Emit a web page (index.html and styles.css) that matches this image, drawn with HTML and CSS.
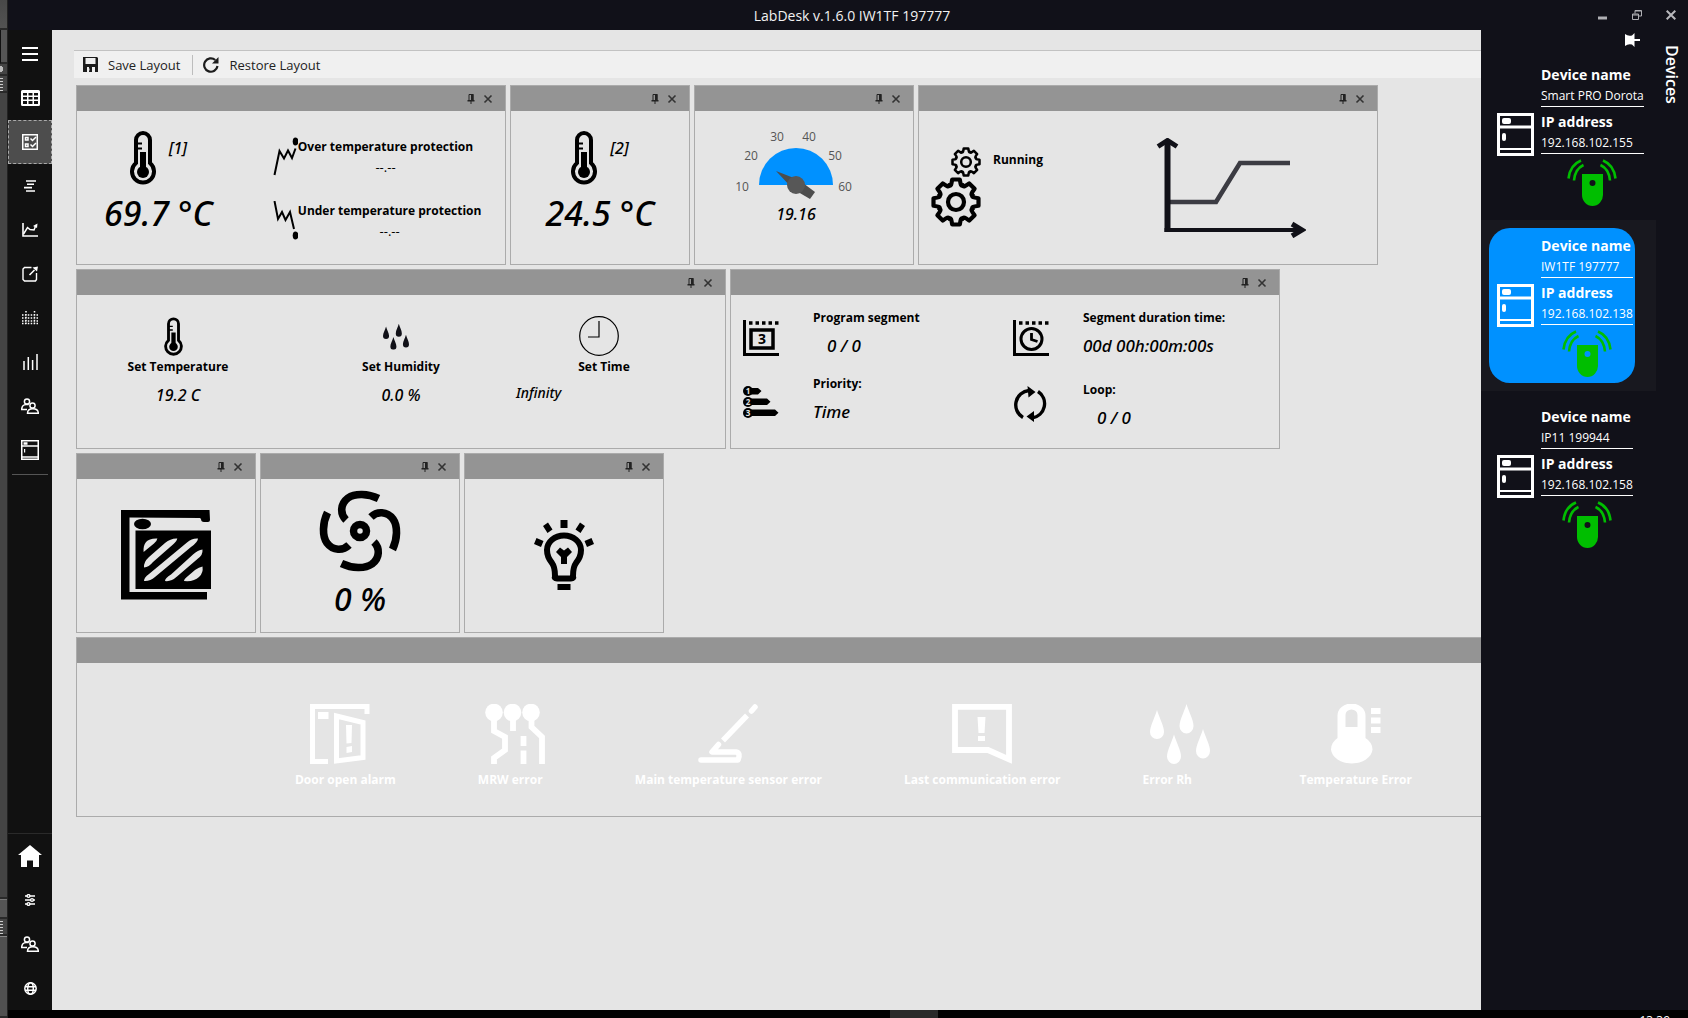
FILE: index.html
```
<!DOCTYPE html>
<html lang="en">
<head>
<meta charset="utf-8">
<title>LabDesk v.1.6.0</title>
<link rel="stylesheet" href="styles.css">
</head>
<body>
<svg class="defs" aria-hidden="true">
  <defs>
    <symbol id="thermo" viewBox="0 0 26 56">
      <path d="M6 34V11a7 7 0 0 1 14 0v23a11 11 0 1 1-14 0z" fill="none" stroke="#000" stroke-width="4"/>
      <circle cx="13" cy="43" r="6"/><path d="M10 23h6v20h-6zM6 13.500h6v2H6zM6 18.500h6v2H6z"/>
    </symbol>
    <symbol id="pin" viewBox="0 0 10 12">
      <path d="M3 1.500h4v6H3z" fill="none" stroke="#222"/><path d="M5 1h2.500v7H5zM1.500 7h7v1.500h-7zM4.500 8h1v3h-1z" fill="#222"/>
    </symbol>
    <symbol id="close" viewBox="0 0 10 10"><path d="M1.500 1.500l7 7M8.500 1.500l-7 7" stroke="#333" stroke-width="1.600"/></symbol>
    <symbol id="gear" viewBox="-25 -25 50 50">
      <g fill="none" stroke="#000" stroke-width="4.200" stroke-linejoin="round" stroke-linecap="round">
        <path id="t" d="M-6.800 -16.500C-5 -15.800 -4.700 -17 -3.800 -22.500H3.800C4.700 -17 5 -15.800 6.800 -16.500"/>
        <use href="#t" transform="rotate(45)"/><use href="#t" transform="rotate(90)"/><use href="#t" transform="rotate(135)"/><use href="#t" transform="rotate(180)"/><use href="#t" transform="rotate(225)"/><use href="#t" transform="rotate(270)"/><use href="#t" transform="rotate(315)"/>
        <circle r="8"/>
      </g>
    </symbol>
    <symbol id="drops" viewBox="0 0 60 60">
      <path d="M7 6C9 13 14 22 14 28a7 7 0 0 1-14 0C0 22 5 13 7 6zM36.500 0c2 7 7 16 7 22a7 7.500 0 0 1-14 0c0-6 5-15 7-22zM24 30.500c2 7 7 16 7 22a7 7.500 0 0 1-14 0c0-6 5-15 7-22zM53 25c2 7 7 16 7 22a7 7.500 0 0 1-14 0c0-6 5-15 7-22z"/>
    </symbol>
    <symbol id="chamber" viewBox="0 0 37 43">
      <g fill="none" stroke="#fff"><path d="M1.500 1.500h34v40h-34zM1.500 14h34" stroke-width="3"/><path d="M1.500 36h34" stroke-width="2"/></g>
      <rect x="5" y="5" width="9" height="6" rx="2" fill="#fff"/><rect x="5" y="20" width="4" height="8" rx="2" fill="#fff"/>
    </symbol>
    <symbol id="sensor" viewBox="0 0 50 48">
      <path fill="#00be00" fill-rule="evenodd" d="M15 15h21v21a10.500 11 0 0 1-21 0zM25.500 21a3 3 0 1 0 0 6 3 3 0 0 0 0-6z"/>
      <path d="M7 21.500Q8 10 16.500 6M1.500 19.500Q3 6 14 1.500M43 21.500Q42 10 33.500 6M48.500 19.500Q47 6 36 1.500" fill="none" stroke="#00be00" stroke-width="2.600"/>
    </symbol>
    <symbol id="users" viewBox="0 0 18 16">
      <g fill="none" stroke="#fff" stroke-width="1.500"><circle cx="6" cy="3.500" r="2.600"/><circle cx="11.500" cy="7.500" r="2.600"/><path d="M6.500 15.300h10.800c0-3-2-4.500-5.500-4.500s-5.300 1.500-5.300 4.500zM6 11.500H.7c0-3 2-5 4.500-5h2.500"/></g>
    </symbol>
  </defs>
</svg>

<div class="desktop">
  <div class="backdrop" aria-hidden="true">
    <i class="b-top"></i><i class="b-bar"></i><i class="b-row"></i><i class="b-grip"></i><i class="b-fill"></i><i class="b-bar2"></i><i class="b-grip"></i><i class="b-end"></i>
  </div>

  <div class="app">
    <header class="titlebar">
      <h1>LabDesk v.1.6.0 IW1TF 197777</h1>
      <div class="win">
        <button aria-label="Minimise"><svg width="10" height="10" viewBox="0 0 10 10"><path d="M0 8h9" stroke="#b0b0b4" stroke-width="3"/></svg></button>
        <button aria-label="Restore"><svg width="10" height="10" viewBox="0 0 10 10"><path d="M.5 4h6v5.500h-6zM.5 5h6M3 3.500v-3h6.500V6H7M3 1h6.500" fill="none" stroke="#b0b0b4"/></svg></button>
        <button aria-label="Close"><svg width="10" height="10" viewBox="0 0 10 10"><path d="M.7.7l8.600 8.600M9.300.7L.7 9.300" stroke="#b8b8bc" stroke-width="2"/></svg></button>
      </div>
    </header>

    <div class="main">
      <nav class="rail">
        <button aria-label="Menu"><svg width="16" height="14" viewBox="0 0 16 14"><path d="M0 1h16M0 7h16M0 13h16" stroke="#fff" stroke-width="2"/></svg></button>
        <button aria-label="Table"><svg width="19" height="16" viewBox="0 0 19 16"><path fill="#fff" fill-rule="evenodd" d="M1.500 0h16A1.500 1.500 0 0 1 19 1.500v13a1.500 1.500 0 0 1-1.500 1.500h-16A1.500 1.500 0 0 1 0 14.500v-13A1.500 1.500 0 0 1 1.500 0zM2 3v2.500h4V3zm5.500 0v2.500h4V3zM13 3v2.500h4V3zM2 7v2.500h4V7zm5.500 0v2.500h4V7zM13 7v2.500h4V7zM2 11v3h4v-3zm5.500 0v3h4v-3zm5.500 0v3h4v-3z"/></svg></button>
        <button class="on" aria-label="Dashboard"><svg width="16" height="16" viewBox="0 0 16 16"><rect x=".75" y=".75" width="14.500" height="14.500" fill="none" stroke="#fff" stroke-width="1.500"/><path d="M3.500 3.500h2.500v2.500H3.500zM3.500 10h2.500v2.500H3.500z" fill="none" stroke="#fff" stroke-width="1.500"/><path d="M8.500 4.500l2 2L14 3M8.500 10.500l2 2L14 9" fill="none" stroke="#fff" stroke-width="1.500"/></svg></button>
        <button aria-label="Programs"><svg width="12" height="12" viewBox="0 0 12 12"><path d="M2 1h10M3 4.300h7M0 7.600h8M2 11h9" stroke="#fff" stroke-width="1.600"/></svg></button>
        <button aria-label="Chart"><svg width="16" height="14" viewBox="0 0 16 14"><path d="M1 0v13h15" fill="none" stroke="#fff" stroke-width="1.600"/><path d="M1.500 11l4-6.500 2.500 2 4 .5L14 2" fill="none" stroke="#fff" stroke-width="1.500"/><path d="M11 3L15.500.500 15 5z" fill="#fff"/></svg></button>
        <button aria-label="Export"><svg width="16" height="16" viewBox="0 0 16 16"><path d="M9.500 1.500H2.500L1 3v10.500L2.500 15h11l1-1.500V7" fill="none" stroke="#fff" stroke-width="1.400"/><path d="M7.500 9l5-5" stroke="#fff" stroke-width="1.600"/><path d="M10.500 1.500L16 .500 15 5.500z" fill="#fff"/></svg></button>
        <button aria-label="Matrix"><svg width="16" height="14" viewBox="0 0 16 14"><path d="M0 4h16M0 7h16M0 10h16M0 12.500h16M4 0v14M12.500 0v14" stroke="#fff" stroke-width="1.500" stroke-dasharray="1.500 1.400"/></svg></button>
        <button aria-label="Statistics"><svg width="15" height="16" viewBox="0 0 15 16"><path d="M1 7v9M5.300 3v13M9.600 6v10M14 0v16" stroke="#fff" stroke-width="1.500"/></svg></button>
        <button aria-label="Users"><svg width="18" height="16"><use href="#users"/></svg></button>
        <button aria-label="Chamber"><svg width="18" height="20" viewBox="0 0 18 20"><path d="M.75.75h16.500v18.500H.75zM.75 6h16.500M.75 17h16.500" fill="none" stroke="#fff" stroke-width="1.500"/><path d="M2.500 2.300h4v2.400h-4zM3 9h1.200v3.500H3z" fill="#fff"/></svg></button>
        <hr>
        <div class="rail-foot">
          <button aria-label="Home"><svg width="24" height="22" viewBox="0 0 24 22"><path d="M12 0L0 10h3v12h6v-6.500h6V22h6V10h3z" fill="#fff"/></svg></button>
          <button aria-label="Settings"><svg width="10" height="12" viewBox="0 0 10 12"><path d="M0 2h10M0 6h10M0 10h10" stroke="#fff" stroke-width="1.400"/><g fill="#111" stroke="#fff" stroke-width="1.400"><circle cx="3.500" cy="2" r="1.400"/><circle cx="7" cy="6" r="1.400"/><circle cx="3.500" cy="10" r="1.400"/></g></svg></button>
          <button aria-label="Accounts"><svg width="18" height="16"><use href="#users"/></svg></button>
          <button aria-label="Language"><svg width="13" height="13" viewBox="0 0 13 13"><g fill="none" stroke="#fff" stroke-width="1.500"><circle cx="6.500" cy="6.500" r="5.700"/><ellipse cx="6.500" cy="6.500" rx="2.800" ry="5.700"/><path d="M1 4.700h11M1 8.300h11"/></g></svg></button>
        </div>
      </nav>

      <main class="work">
        <div class="toolbar">
          <button><svg width="15" height="15" viewBox="0 0 15 15"><path fill="#1c1c1c" fill-rule="evenodd" d="M0 0h14l1 1v14H0zM2.500 1v6h10V1zM3 10v5h9v-5z"/><path d="M6 10h3v5H6zM3 10h1v5H3z" fill="#1c1c1c"/><path d="M5 11.500h1.500v2H5z" fill="#f0f0f0"/></svg>Save Layout</button>
          <span class="sep"></span>
          <button><svg width="16" height="16" viewBox="0 0 16 16"><path d="M14.500 9A6.700 6.700 0 1 1 12.300 3" fill="none" stroke="#1c1c1c" stroke-width="2.200"/><path d="M15.500 0v6.500H9z" fill="#1c1c1c"/></svg>Restore Layout</button>
        </div>

        <div class="dock">
          <div class="row">
            <section class="panel w430">
              <div class="bar"><button aria-label="Pin"><svg width="10" height="12"><use href="#pin"/></svg></button><button aria-label="Close"><svg width="10" height="10"><use href="#close"/></svg></button></div>
              <div class="body first">
                <div class="reading"><div class="probe"><svg width="26" height="56"><use href="#thermo"/></svg><span>[1]</span></div><p class="big">69.7 °C</p></div>
                <div class="limits">
                  <div class="limit"><svg width="25" height="39" viewBox="0 0 25 39"><path d="M1.500 38L6.500 14l4.500 7.500 4-8L19 21l3.500-9.500" fill="none" stroke="#000" stroke-width="2"/><ellipse cx="22.500" cy="4.500" rx="2.800" ry="4"/></svg><div><b>Over temperature protection</b><span>--.--</span></div></div>
                  <div class="limit"><svg width="25" height="39" viewBox="0 0 25 39"><path d="M1.500 0L5 18l4-7 3.500 8L17 11l4 17" fill="none" stroke="#000" stroke-width="2"/><ellipse cx="22.500" cy="34.500" rx="2.800" ry="4"/></svg><div><b>Under temperature protection</b><span>--.--</span></div></div>
                </div>
              </div>
            </section>
            <section class="panel w180">
              <div class="bar"><button aria-label="Pin"><svg width="10" height="12"><use href="#pin"/></svg></button><button aria-label="Close"><svg width="10" height="10"><use href="#close"/></svg></button></div>
              <div class="body mid"><div class="reading"><div class="probe"><svg width="26" height="56"><use href="#thermo"/></svg><span>[2]</span></div><p class="big">24.5 °C</p></div></div>
            </section>
            <section class="panel w220">
              <div class="bar"><button aria-label="Pin"><svg width="10" height="12"><use href="#pin"/></svg></button><button aria-label="Close"><svg width="10" height="10"><use href="#close"/></svg></button></div>
              <div class="body gauge">
                <svg width="128" height="70" viewBox="0 0 128 70">
                  <path d="M27 60a37 37 0 0 1 74 0z" fill="#0091ff"/>
                  <path d="M44 46l23 9 16 12-5 7-17-10z" fill="#4d4d4d"/><circle cx="64" cy="60" r="9" fill="#575757"/>
                  <g class="ticks" text-anchor="middle"><text x="10" y="66">10</text><text x="19" y="35">20</text><text x="45" y="16">30</text><text x="77" y="16">40</text><text x="103" y="35">50</text><text x="113" y="66">60</text></g>
                </svg>
                <p class="val">19.16</p>
              </div>
            </section>
            <section class="panel w460">
              <div class="bar"><button aria-label="Pin"><svg width="10" height="12"><use href="#pin"/></svg></button><button aria-label="Close"><svg width="10" height="10"><use href="#close"/></svg></button></div>
              <div class="body state">
                <div class="gears"><svg width="30" height="30"><use href="#gear"/></svg><svg width="50" height="50"><use href="#gear"/></svg></div>
                <b>Running</b>
                <svg class="profile" width="150" height="100" viewBox="0 0 150 100"><path d="M14 64h46L84 25h50" fill="none" stroke="#3c3c43" stroke-width="4.600"/><path d="M11.500 3v91" stroke="#111118" stroke-width="6"/><path d="M8.500 92H144" stroke="#111118" stroke-width="4"/><path d="M2 8.500l9.500-6 9.500 6M136 86l10 6-10 6" fill="none" stroke="#111118" stroke-width="5"/></svg>
              </div>
            </section>
          </div>

          <div class="row">
            <section class="panel w650">
              <div class="bar"><button aria-label="Pin"><svg width="10" height="12"><use href="#pin"/></svg></button><button aria-label="Close"><svg width="10" height="10"><use href="#close"/></svg></button></div>
              <div class="body setpoints">
                <div><svg width="19" height="40"><use href="#thermo"/></svg><b>Set Temperature</b><p class="val">19.2 C</p></div>
                <div><svg width="26" height="40" viewBox="0 -18 60 92" fill="#111118"><use href="#drops" width="60" height="60"/></svg><b>Set Humidity</b><p class="val">0.0 %</p></div>
                <div><svg width="40" height="40" viewBox="0 0 40 40"><circle cx="20" cy="20" r="19.300" fill="none" stroke="#000" stroke-width="1.200"/><path d="M20 5v16H9" fill="none" stroke="#000" stroke-width="1.200"/></svg><b>Set Time</b><p class="val note">Infinity</p></div>
              </div>
            </section>
            <section class="panel w550">
              <div class="bar"><button aria-label="Pin"><svg width="10" height="12"><use href="#pin"/></svg></button><button aria-label="Close"><svg width="10" height="10"><use href="#close"/></svg></button></div>
              <div class="body program">
                <div class="fact"><svg width="36" height="36" viewBox="0 0 36 36"><path d="M1.500 0v34.500H36" fill="none" stroke="#000" stroke-width="3"/><path d="M6 3h30" stroke="#000" stroke-width="3.500" stroke-dasharray="3.500 3"/><path d="M8 10h22v18H8z" fill="none" stroke="#000" stroke-width="3.500"/><text class="digit" x="19" y="24" text-anchor="middle">3</text></svg><div><b>Program segment</b><p class="val in">0 / 0</p></div></div>
                <div class="fact"><svg width="36" height="36" viewBox="0 0 36 36"><path d="M1.500 0v34.500H36" fill="none" stroke="#000" stroke-width="3"/><path d="M6 3h30" stroke="#000" stroke-width="3.500" stroke-dasharray="3.500 3"/><circle cx="18.500" cy="19" r="10.500" fill="none" stroke="#000" stroke-width="3"/><path d="M18.500 13v6.500l6 2" fill="none" stroke="#000" stroke-width="2.800"/></svg><div><b>Segment duration time:</b><p class="val">00d 00h:00m:00s</p></div></div>
                <div class="fact"><svg width="36" height="32" viewBox="0 0 36 32"><path d="M4 2h11l3.500 3L15 8.500H4zM4 12.500h20l3.500 3.300L24 19H4zM4 23.500h28l3.500 3.300L32 30H4z"/><circle cx="5" cy="5" r="5"/><circle cx="5" cy="16" r="5"/><circle cx="5" cy="27" r="5"/><g class="tiny" text-anchor="middle"><text x="5" y="8">1</text><text x="5" y="19">2</text><text x="5" y="30">3</text></g></svg><div><b>Priority:</b><p class="val">Time</p></div></div>
                <div class="fact low"><svg width="36" height="36" viewBox="0 0 36 36"><g fill="none" stroke="#000" stroke-width="3.400"><path d="M10 31.500A14.500 14.500 0 0 1 16 4.500M25 5.500A14.500 14.500 0 0 1 19 32"/></g><path d="M14.500 0l8 6-7 5.500zM21 25v11l-7.500-5.500z"/></svg><div><b>Loop:</b><p class="val in">0 / 0</p></div></div>
              </div>
            </section>
          </div>

          <div class="row">
            <section class="panel w180">
              <div class="bar"><button aria-label="Pin"><svg width="10" height="12"><use href="#pin"/></svg></button><button aria-label="Close"><svg width="10" height="10"><use href="#close"/></svg></button></div>
              <div class="body mid door"><svg width="90" height="90" viewBox="0 0 90 90"><path d="M0 0h88.500l.5 10q0 2-2 2h-4q-3 0-3-3l-1-1L8.500 7.500V82H86v7.500H0z"/><ellipse cx="21.500" cy="14" rx="8.500" ry="5.300"/><path fill-rule="evenodd" d="M14.500 20.500H90V79H14.500zM22.600 42C22 33 26 28 36.400 28.500Q36 31 33 33.500zM56.300 28.500Q50 28 44 33L28 47Q22.500 52 23 57.500 28 57 32 52L52 34.500Q56 31 56.300 28.500zM77 28.500Q71 28 66 32.500L28 64Q23 67.500 23 71 29 71.500 34 67L70 37Q77 32 77 28.500zM81.500 39.500Q77 40 72 44.500L50 64.500Q44 68 44 71 50 72 56 66.500L77 48.500Q82 45 81.500 39.500zM81.500 56.500Q78 57 74 60L67 66Q63 69 63 71 73 72 78 67 82.500 63 81.500 56.500z"/></svg></div>
            </section>
            <section class="panel w200">
              <div class="bar"><button aria-label="Pin"><svg width="10" height="12"><use href="#pin"/></svg></button><button aria-label="Close"><svg width="10" height="10"><use href="#close"/></svg></button></div>
              <div class="body mid fan"><svg width="82" height="82" viewBox="-41 -41 82 82"><g fill="none" stroke="#000" stroke-width="7.600"><path id="blade" d="M18.500 -32.500C8 -37.500 -5 -38 -12 -33C-20 -27 -20 -17 -14 -11"/><use href="#blade" transform="rotate(90)"/><use href="#blade" transform="rotate(180)"/><use href="#blade" transform="rotate(270)"/><circle r="6.500" stroke-width="7.500"/></g></svg><p class="big">0 %</p></div>
            </section>
            <section class="panel w200">
              <div class="bar"><button aria-label="Pin"><svg width="10" height="12"><use href="#pin"/></svg></button><button aria-label="Close"><svg width="10" height="10"><use href="#close"/></svg></button></div>
              <div class="body mid lamp"><svg width="60" height="70" viewBox="0 0 60 70"><path d="M21 56q-1 2.500 2 2.500h14q3 0 2-2.500 0-9 3-13 5-6 5-13a17 14.500 0 0 0-34 0q0 7 5 13 3 4 3 13z" fill="none" stroke="#000" stroke-width="6"/><path d="M26.500 0h7v8h-7zM23.500 64h13v6h-13zM9 6l5-3.500 4.500 7-5 3.500zM51 6l-5-3.500-4.500 7 5 3.500zM2.500 18l7 3-2.500 6-7-3zM57.500 18l-7 3 2.500 6 7-3zM22 32l4-4.500 4 3 4-3 4 4.500-5 5v7h-6v-7z"/></svg></div>
            </section>
          </div>

          <div class="row">
            <section class="panel wide">
              <div class="bar"></div>
              <ul class="body alarms">
                <li><svg class="hinged" width="60" height="60" viewBox="0 0 60 60" fill="none" stroke="#fff" stroke-width="5"><path d="M57 10V2.500H2.500v55H18"/><path d="M26.500 12l26.500 6.500v35L26.500 57z"/><path d="M8 8h10.500v7H8zM36 21h6l-.5 18-5 .5zM36.500 43l5.500-1v6l-5.500 1z" fill="#fff" stroke="none"/></svg>Door open alarm</li>
                <li><svg width="60" height="60" viewBox="0 0 60 60"><g fill="none" stroke="#fff" stroke-width="5.800"><path d="M9 8v19l11 6v13L9 54v6M28 8v19M46.500 8v15L57 33v27M38.500 32v10M38.500 46.500V60"/></g><g fill="#fff"><circle cx="9" cy="8.500" r="8.800"/><circle cx="27.500" cy="8.500" r="8.800"/><circle cx="46" cy="8.500" r="8.800"/></g></svg><span class="lead">MRW error</span></li>
                <li><svg width="60" height="60" viewBox="0 0 60 60" fill="none" stroke="#fff" stroke-width="5.500"><path d="M57 3l-3.500 4" stroke-linecap="round"/><path d="M49 11.500L25 36.500"/><path d="M20.500 40.500L14 48h24q5 1 2 8H3" stroke-linecap="round" stroke-linejoin="round"/></svg>Main temperature sensor error</li>
                <li><svg width="60" height="60" viewBox="0 0 60 60"><path d="M3 2.800h54v52.500L36 46H3z" fill="none" stroke="#fff" stroke-width="5.800"/><path d="M25.500 13h8l-1 16h-6zM26 32h7v5h-7z" fill="#fff"/></svg>Last communication error</li>
                <li><svg width="60" height="60" fill="#fff"><use href="#drops"/></svg><span class="lead">Error Rh</span></li>
                <li><svg width="60" height="60" viewBox="0 0 60 60" fill="#fff"><path fill-rule="evenodd" d="M11.500 11.500a14 12 0 0 1 28 0V34q7 4.500 7 11.500A20.800 15 0 0 1 5 45.500Q5 38.500 11.500 34zM19.500 11v12h12V11a6 5.500 0 0 0-12 0z"/><path d="M45 4h9.500v6H45zM45 13.500h9.500v6H45zM45 23h9.500v6H45z"/></svg>Temperature Error</li>
              </ul>
            </section>
          </div>
        </div>
      </main>

      <aside class="devices">
        <div class="list">
          <div class="pinrow"><button aria-label="Unpin"><svg width="16" height="14" viewBox="0 0 16 14"><path d="M1 1q3 2.500 7 1.500L10.500 0v14L8 11.500Q4 10.500 1 13zM10 6h6v2h-6z" fill="#fff"/></svg></button></div>
          <div class="slot"><article class="device"><svg width="37" height="43"><use href="#chamber"/></svg><div class="info"><dl><dt>Device name</dt><dd>Smart PRO Dorota</dd><dt>IP address</dt><dd>192.168.102.155</dd></dl><svg width="50" height="48"><use href="#sensor"/></svg></div></article></div>
          <div class="slot active"><article class="device"><svg width="37" height="43"><use href="#chamber"/></svg><div class="info"><dl><dt>Device name</dt><dd>IW1TF 197777</dd><dt>IP address</dt><dd>192.168.102.138</dd></dl><svg width="50" height="48"><use href="#sensor"/></svg></div></article></div>
          <div class="slot"><article class="device"><svg width="37" height="43"><use href="#chamber"/></svg><div class="info"><dl><dt>Device name</dt><dd>IP11 199944</dd><dt>IP address</dt><dd>192.168.102.158</dd></dl><svg width="50" height="48"><use href="#sensor"/></svg></div></article></div>
        </div>
        <button class="tab">Devices</button>
      </aside>
    </div>

    <footer class="taskbar"><span class="task"></span><time>13:39</time></footer>
  </div>
</div>
</body>
</html>
```
FILE: styles.css
```
* { box-sizing: border-box; }
body, h1, p, ul, dl, dd, hr { margin: 0; padding: 0; }
body { font: 13px/20px "Open Sans", "Noto Sans", sans-serif; color: #000; background: #020202; }
button { margin: 0; padding: 0; border: 0; background: none; font: inherit; color: inherit; cursor: pointer; }
svg { display: block; flex: none; }
b { font-size: 12px; font-weight: 700; }
.defs { position: absolute; width: 0; height: 0; }

.desktop { display: flex; height: 100vh; overflow: hidden; }
.app { flex: 1; min-width: 0; display: flex; flex-direction: column; background: #111119; }

/* sliver of the window behind the app */
.backdrop { width: 8px; display: flex; flex-direction: column; background: #444; border-right: 1px solid #222; overflow: hidden; }
.backdrop i { display: block; border-bottom: 2px solid #292929; }
.b-top { height: 30px; background: linear-gradient(#484848, #525252); }
.b-bar { height: 34px; background: #555; border-left: 1px solid #111; }
.b-row { height: 12px; background: linear-gradient(45deg, transparent 50%, #444 50%), linear-gradient(135deg, #444 50%, #bbb 50%); background: radial-gradient(circle at 0 5px, #bbb 3px, #444 3px); }
.b-grip { height: 17px; background: linear-gradient(90deg, transparent 3px, #444 3px), repeating-linear-gradient(#444 0 2px, #ccc 2px 3px); }
.b-fill { flex: 1; }
.b-bar2 { height: 20px; background: #555; border-top: 1px solid #777; }
.b-end { height: 82px; background: #505050; border-top: 1px solid #888; }

.titlebar { position: relative; height: 30px; display: flex; align-items: center; justify-content: center; padding: 1px 0 0 8px; color: #f2f2f2; }
.titlebar h1 { font-size: 14px; font-weight: 400; }
.win { position: absolute; top: 0; right: 12px; height: 30px; display: flex; align-items: center; gap: 24px; }

.main { flex: 1; min-height: 0; display: flex; }
.rail { width: 44px; display: flex; flex-direction: column; background: #111; padding-top: 2px; }
.rail button { width: 44px; height: 44px; display: flex; align-items: center; justify-content: center; }
.rail .on { background: #4d4d4d; border: 1px dashed #aaa; }
.rail hr { width: 36px; margin: 2px 4px; border: 0; border-top: 1px solid #555; }
.rail-foot { margin-top: auto; border-top: 1px solid #2a2a2a; }

.work { flex: 1; min-width: 0; overflow: hidden; background: #e5e5e5; padding: 20px 0 0 22px; }
.toolbar { height: 28px; display: flex; align-items: center; background: #f0f0f0; border-top: 1px solid #c2c2c2; padding-left: 9px; color: #222; }
.toolbar button { display: flex; align-items: center; gap: 10px; }
.sep { width: 1px; height: 20px; margin: 0 10px 0 12px; background: #bdbdbd; }

.dock { display: flex; flex-direction: column; gap: 4px; padding: 7px 0 0 2px; }
.row { display: flex; gap: 4px; }
.panel { flex: none; height: 180px; border: 1px solid #ababab; }
.w180 { width: 180px; }
.w200 { width: 200px; }
.w220 { width: 220px; }
.w430 { width: 430px; }
.w460 { width: 460px; }
.w550 { width: 550px; }
.w650 { width: 650px; }
.wide { width: 1552px; }
.bar { height: 25px; display: flex; align-items: center; justify-content: flex-end; gap: 7px; padding-right: 12px; background: #949494; }
.body { height: 153px; }

.big, .val, .probe span { font-family: "Noto Sans", "Open Sans", sans-serif; font-style: italic; font-weight: 500; }
.big { font-size: 34px; line-height: 40px; }
.val { font-size: 16px; line-height: 24px; }

.first { display: flex; padding: 18px 0 0 27px; }
.reading { display: flex; flex-direction: column; align-items: center; gap: 8px; }
.probe { display: flex; gap: 13px; }
.probe span { font-size: 16px; line-height: 38px; }
.limits { display: flex; flex-direction: column; gap: 20px; padding: 8px 0 0 60px; }
.limit { display: flex; align-items: flex-start; height: 44px; }
.limit div { display: flex; flex-direction: column; align-items: center; }
.mid { display: flex; flex-direction: column; align-items: center; padding-top: 18px; }

.gauge { display: flex; flex-direction: column; align-items: center; padding: 14px 16px 0 0; }
.gauge svg { overflow: visible; margin-bottom: 7px; }
.ticks { font-size: 12px; fill: #555; }

.state { display: flex; padding-left: 12px; }
.gears { width: 50px; display: flex; flex-direction: column; align-items: flex-end; padding-top: 36px; }
.state b { padding: 39px 0 0 12px; }
.profile { margin: 27px 71px 0 auto; }

.setpoints { display: grid; grid-template-columns: 223px 202px 204px; padding-top: 21px; }
.setpoints div { display: flex; flex-direction: column; align-items: center; }
.setpoints div:first-child { padding-right: 21px; }
.setpoints svg { margin: 0 10px 1px 0; }
.setpoints .val { margin-top: 6px; }
.setpoints .note { align-self: flex-start; font-size: 14px; line-height: 20px; padding-left: 14px; }

.program { display: grid; grid-template-columns: 270px 270px; grid-template-rows: 66px 66px; padding: 12px 0 0 12px; }
.fact { display: flex; gap: 34px; }
.fact > svg { margin-top: 13px; }
.fact .val { margin-top: 6px; font-size: 17px; }
.fact .in { padding-left: 14px; }
.low div { padding-top: 6px; }
.digit { font: 700 14px "Open Sans", sans-serif; }
.tiny { font: 700 8px "Open Sans", sans-serif; fill: #e5e5e5; }

.door { padding-top: 31px; }
.fan { padding-top: 11px; gap: 7px; }
.lamp { padding-top: 41px; }
.fan .big { font-size: 32px; }

.alarms { display: flex; justify-content: center; gap: 82px; list-style: none; padding: 41px 0 0 3px; color: #fff; font-size: 12px; font-weight: 700; }
.alarms li { display: flex; flex-direction: column; align-items: center; gap: 6px; min-width: 75px; white-space: nowrap; }
.alarms .lead { align-self: flex-start; }
.alarms .hinged { margin-right: 10px; }

.devices { flex: none; display: flex; width: 207px; color: #fff; }
.list { width: 175px; }
.pinrow { height: 19px; display: flex; align-items: center; justify-content: flex-end; padding-right: 16px; }
.slot { height: 171px; padding: 8px; }
.active { background: #18181f; }
.device { width: max-content; height: 155px; display: flex; align-items: center; gap: 7px; padding: 0 2px 0 8px; border-radius: 21px; }
.active .device { background: #0091ff; }
.info { display: flex; flex-direction: column; align-items: center; height: 147px; padding-top: 2px; }
.device dt { font-size: 14px; line-height: 24px; font-weight: 700; }
.device dd { font-size: 12px; line-height: 18px; height: 20px; margin-bottom: 3px; border-bottom: 1px solid #fff; }
.info svg { margin-top: 2px; }
.tab { align-self: flex-start; width: 24px; margin: 15px 0 0 4px; writing-mode: vertical-rl; font-size: 16px; font-weight: 600; line-height: 24px; }

.taskbar { height: 8px; display: flex; justify-content: space-between; overflow: hidden; background: #020202; color: #fff; padding: 0 18px 0 882px; }
.task { width: 48px; background: #2a2a2a; }
.taskbar time { font-size: 12px; line-height: 16px; padding-top: 3px; }
```
